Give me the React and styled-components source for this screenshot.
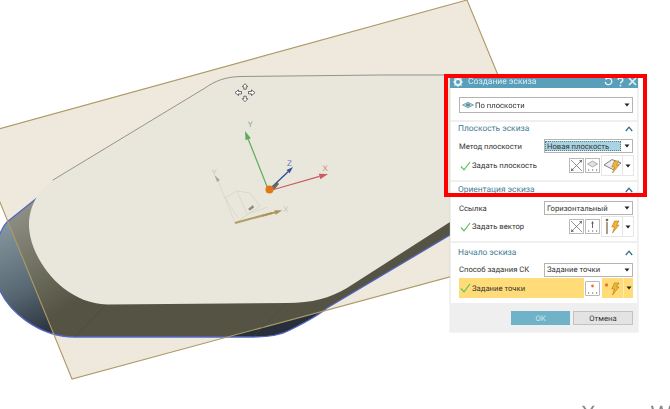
import React from 'react';
import styled, { createGlobalStyle } from 'styled-components';

const GlobalStyle = createGlobalStyle`
  html, body {
    margin: 0;
    padding: 0;
    background: #fff;
    font-family: Roboto, "Liberation Sans", sans-serif;
    text-rendering: geometricPrecision;
  }
`;

const Canvas = styled.div`
  position: relative;
  width: 670px;
  height: 409px;
  overflow: hidden;
  background: #fff;
`;

const Scene = styled.svg`
  display: block;
  width: 670px;
  height: 409px;
`;

const Watermark = styled.div`
  position: absolute;
  left: 581px;
  top: 401px;
  display: flex;
  gap: 55px;
  font-family: "Liberation Sans", sans-serif;
  font-size: 22px;
  line-height: 26px;
  color: #8a8a8a;
  filter: blur(0.7px);
`;

const Dialog = styled.div`
  position: absolute;
  left: 450px;
  top: 75px;
  width: 188px;
  height: 257px;
  display: flex;
  flex-direction: column;
  gap: 2px;
  box-sizing: border-box;
  background: #efefef;
  box-shadow: 0 0 1px #bdbdbd;
  filter: blur(0.35px);
`;

const TitleBar = styled.div`
  height: 13px;
  margin-bottom: -2px;
  padding: 0 1px 0 3px;
  display: flex;
  align-items: center;
  gap: 5px;
  background: #5a9fb9;
`;

const TitleText = styled.span`
  flex: 1;
  font-size: 8.5px;
  line-height: 13px;
  color: #dcecf2;
  padding-top: 1px;
`;

const TitleActions = styled.div`
  display: flex;
  align-items: center;
  gap: 4px;
`;

const Section = styled.section`
  height: ${(p) => p.$h}px;
  padding: ${(p) => p.$top || 0}px 4px 0 8px;
  box-sizing: border-box;
  background: #fff;
  margin: 0 1px;
  display: flex;
  flex-direction: column;
`;

const SectionHeader = styled.div`
  display: flex;
  align-items: center;
  justify-content: space-between;
  height: 13px;
  margin-left: -1px;
  font-size: 8.4px;
  color: #3f7d94;
`;

const Row = styled.div`
  display: flex;
  align-items: center;
  justify-content: space-between;
  height: ${(p) => p.$h}px;
  margin-top: ${(p) => p.$mt || 0}px;
`;

const Label = styled.span`
  font-size: 7.7px;
  color: #333;
  white-space: nowrap;
`;

const CheckLabel = styled.div`
  display: flex;
  align-items: center;
  gap: 1px;
  padding-left: 1px;
  font-size: 7.7px;
  color: #333;
  white-space: nowrap;
`;

const Combo = styled.div`
  width: ${(p) => (p.$wide ? '174px' : '89px')};
  height: ${(p) => p.$h || 14}px;
  box-sizing: border-box;
  padding: 1px 0;
  display: flex;
  align-items: center;
  border: 1px solid #b4b4b4;
  background: #fff;
  font-size: 7.7px;
  color: #333;
`;

const ComboText = styled.span`
  flex: 1;
  display: flex;
  align-items: center;
  align-self: stretch;
  gap: 1px;
  padding-left: 2px;
  white-space: nowrap;
  background: ${(p) => (p.$active ? '#a9d5e3' : 'transparent')};
  outline: ${(p) => (p.$active ? '1px dotted #5c7f8c' : 'none')};
  outline-offset: -1px;
`;

const ComboArrow = styled.span`
  width: 11px;
  display: flex;
  justify-content: center;
`;

const Tools = styled.div`
  display: flex;
  align-items: center;
`;

const ToolButton = styled.div`
  width: 15px;
  height: 15px;
  box-sizing: border-box;
  display: flex;
  align-items: center;
  justify-content: center;
  background: #fff;
  border: 1px solid #b9b9b9;

  & + & {
    margin-left: 1px;
  }
`;

const BigButton = styled.div`
  width: 21px;
  height: 19px;
  margin-left: 2px;
  box-sizing: border-box;
  display: flex;
  align-items: center;
  justify-content: center;
  background: #fff;
  box-shadow: 0 0 0 1px #e6e6e6;
`;

const DropButton = styled.div`
  width: 10px;
  height: 19px;
  box-sizing: border-box;
  display: flex;
  align-items: center;
  justify-content: center;
  background: #fff;
  box-shadow: 0 0 0 1px #e6e6e6;
`;

const ActiveRow = styled.div`
  display: flex;
  align-items: center;
  height: 20px;
  margin-top: 1px;
`;

const ActiveLabel = styled.div`
  width: 125px;
  align-self: stretch;
  display: flex;
  align-items: center;
  gap: 1px;
  padding-left: 1px;
  box-sizing: border-box;
  background: #ffdc78;
  font-size: 7.7px;
  color: #333;
`;

const ActiveTool = styled(ToolButton)`
  margin-left: 1px;
  border-radius: 1px;
`;

const ActiveBig = styled.div`
  width: 21px;
  height: 20px;
  margin-left: 2px;
  display: flex;
  align-items: center;
  justify-content: center;
  background: #ffdc78;
`;

const ActiveDrop = styled.div`
  width: 10px;
  height: 20px;
  box-sizing: border-box;
  display: flex;
  align-items: center;
  justify-content: center;
  border-left: 1px solid #ffeab0;
  background: #ffdc78;
`;

const Footer = styled.div`
  display: flex;
  justify-content: flex-end;
  gap: 3px;
  padding: 6px 5px 0 0;
`;

const FormButton = styled.div`
  width: ${(p) => (p.$primary ? 59 : 60)}px;
  height: 14px;
  box-sizing: border-box;
  display: flex;
  align-items: center;
  justify-content: center;
  font-size: 7.7px;
  background: ${(p) => (p.$primary ? '#70b3c9' : '#e3e3e3')};
  color: ${(p) => (p.$primary ? '#cfe6ee' : '#333')};
  border: 1px solid ${(p) => (p.$primary ? '#70b3c9' : '#c2c2c2')};
`;

const Highlight = styled.div`
  position: absolute;
  left: 444px;
  top: 74px;
  width: 203px;
  height: 123px;
  box-sizing: border-box;
  border: 4px solid #f00;
  pointer-events: none;
`;

const Gear = () => (
  <svg width="10" height="10" viewBox="0 0 10 10">
    <circle cx="5" cy="5" r="3" fill="none" stroke="#e8f3f7" strokeWidth="2" />
    <path d="M5 0v2M5 8v2M0 5h2M8 5h2M1.4 1.4l1.4 1.4M7.2 7.2l1.4 1.4M1.4 8.6l1.4-1.4M7.2 2.8l1.4-1.4" stroke="#e8f3f7" strokeWidth="1.2" />
  </svg>
);

const Reset = () => (
  <svg width="9" height="9" viewBox="0 0 9 9">
    <path d="M2.2 2A3.3 3.3 0 1 1 1.2 4.8" fill="none" stroke="#e8f3f7" strokeWidth="1.3" />
    <path d="M0.8 0.6L3.6 0.9L1.9 3.2Z" fill="#e8f3f7" />
  </svg>
);

const Help = () => (
  <svg width="7" height="10" viewBox="0 0 7 10">
    <path d="M1 2.8C1.2 0.6 5.8 0.5 5.8 2.9C5.8 4.6 3.5 4.6 3.5 6.6" fill="none" stroke="#e8f3f7" strokeWidth="1.4" />
    <rect x="2.7" y="7.8" width="1.6" height="1.6" fill="#e8f3f7" />
  </svg>
);

const Close = () => (
  <svg width="9" height="9" viewBox="0 0 9 9">
    <path d="M1 1L8 8M8 1L1 8" stroke="#e8f3f7" strokeWidth="1.5" />
  </svg>
);

const Caret = () => (
  <svg width="6" height="4" viewBox="0 0 6 4">
    <path d="M0.5 0.5H5.5L3 3.5Z" fill="#222" />
  </svg>
);

const Chevron = () => (
  <svg width="8" height="6" viewBox="0 0 8 6">
    <path d="M0.8 5L4 1.2L7.2 5" fill="none" stroke="#2f6f8a" strokeWidth="1.3" />
  </svg>
);

const Check = () => (
  <svg width="11" height="10" viewBox="0 0 11 10">
    <path d="M1 5.5L4 8.8L10 1" fill="none" stroke="#58c45a" strokeWidth="1.2" />
  </svg>
);

const PlaneEye = () => (
  <svg width="12" height="8" viewBox="0 0 12 8">
    <path d="M0.5 4L6 1.2L11.5 4L6 6.8Z" fill="#b4d0db" stroke="#6f9bac" strokeWidth="0.8" />
    <ellipse cx="6" cy="4" rx="2.2" ry="1.4" fill="#5f8fa3" />
  </svg>
);

const CrossTool = () => (
  <svg width="13" height="13" viewBox="0 0 13 13">
    <path d="M1 12L12 1M1 1L12 12" stroke="#666" strokeWidth="0.7" />
    <path d="M12 1L9 1.5L11.5 4Z M1 12L4 11.5L1.5 9Z" fill="#666" />
  </svg>
);

const Dots = () => <path d="M2 11h1.2M6 11h1.2M10 11h1.2" stroke="#555" strokeWidth="1" />;

const PlaneTool = () => (
  <svg width="13" height="13" viewBox="0 0 13 13">
    <path d="M1.5 5L6.5 2L11.5 5L6.5 8Z" fill="#e2e2e2" stroke="#999" strokeWidth="0.8" />
    <Dots />
  </svg>
);

const VectorTool = () => (
  <svg width="13" height="13" viewBox="0 0 13 13">
    <path d="M6.5 8V2.5" stroke="#555" strokeWidth="0.9" />
    <path d="M6.5 1L7.8 3.6H5.2Z" fill="#555" />
    <Dots />
  </svg>
);

const PointTool = () => (
  <svg width="13" height="13" viewBox="0 0 13 13">
    <circle cx="6.5" cy="4" r="1.4" fill="#e9772b" />
    <Dots />
  </svg>
);

const Bolt = ({ x = 7 }) => (
  <path
    transform={`translate(${x} 3)`}
    d="M3.5 0H8L5.5 4H8L1.5 12L3.5 6H0.8Z"
    fill="#f2b632"
    stroke="#a5791c"
    strokeWidth="0.6"
  />
);

const PlaneBolt = () => (
  <svg width="20" height="16" viewBox="0 0 20 16">
    <path d="M1 7L9 1.5L18 5L10 11.5Z" fill="#ececec" stroke="#666" strokeWidth="0.8" />
    <Bolt x={8} />
  </svg>
);

const VectorBolt = () => (
  <svg width="20" height="17" viewBox="0 0 20 17">
    <path d="M4 16V4" stroke="#7a5b32" strokeWidth="1.2" />
    <circle cx="4" cy="2" r="1.3" fill="#666" />
    <Bolt x={8} />
  </svg>
);

const PointBolt = () => (
  <svg width="20" height="17" viewBox="0 0 20 17">
    <circle cx="3.5" cy="5" r="1.7" fill="#e9772b" />
    <Bolt x={8} />
  </svg>
);

const Arrow = ({ from, to, color, width = 1.2, head = 4 }) => {
  const dx = to[0] - from[0];
  const dy = to[1] - from[1];
  const len = Math.hypot(dx, dy);
  const ux = dx / len;
  const uy = dy / len;
  const bx = to[0] - ux * head * 2;
  const by = to[1] - uy * head * 2;
  const wing = head * 0.65;
  return (
    <g>
      <line x1={from[0]} y1={from[1]} x2={bx} y2={by} stroke={color} strokeWidth={width} />
      <polygon
        points={`${to[0]},${to[1]} ${bx - uy * wing},${by + ux * wing} ${bx + uy * wing},${by - ux * wing}`}
        fill={color}
      />
    </g>
  );
};

const PLANE = '467,0 568,245 72,379 -27,136';
const WALL_EDGE =
  'M37 198 L7 222 C-4 234 -8 262 -3 283 C6 312 40 337 75 337 L253 337 C270 337 281 335 290 330 C302 324 318 316 327 308 L450 235';
const WALL = `${WALL_EDGE} L450 222 L53 180 Z`;
const FACE =
  'M205 88 C215 81 225 77 240 76.5 L380 75 L450 75 L450 222 L347 288 C330 298 312 303 287 303 L107 304.5 C60 303 29 255 29 225 C29 207 38 190 53 180 Z';

const CadScene = () => (
  <Scene viewBox="0 0 670 409">
    <defs>
      <clipPath id="plane-clip">
        <polygon points={PLANE} />
      </clipPath>
      <linearGradient id="wall-blue" gradientUnits="userSpaceOnUse" x1="0" y1="225" x2="50" y2="335">
        <stop offset="0" stopColor="#87979f" />
        <stop offset="0.55" stopColor="#5a6a75" />
        <stop offset="1" stopColor="#27303a" />
      </linearGradient>
      <linearGradient id="wall-olive" gradientUnits="userSpaceOnUse" x1="25" y1="205" x2="80" y2="300">
        <stop offset="0" stopColor="#8f9086" />
        <stop offset="0.5" stopColor="#727364" />
        <stop offset="1" stopColor="#555444" />
      </linearGradient>
    </defs>
    <polygon points={PLANE} fill="#efe9dd" />
    <path d={WALL} fill="url(#wall-blue)" />
    <path d={WALL} fill="url(#wall-olive)" clipPath="url(#plane-clip)" />
    <path d={WALL_EDGE} fill="none" stroke="#5567c4" strokeWidth="1.3" />
    <polygon points={PLANE} fill="none" stroke="#ae9a68" strokeWidth="1.1" />
    <path d="M287 303L253 337M107 304L75 337" stroke="#44443a" strokeWidth="0.5" />
    <path d={FACE} fill="#e9e7db" />
    <path d="M53 180L205 88C215 81 225 77 240 76.5L380 75L450 75" fill="none" stroke="#6f6f68" strokeWidth="0.7" />

    <g stroke="#d4d2c6" strokeWidth="0.7" fill="none">
      <path d="M217 178L235 223L282 210" />
      <path d="M225 198L237 191L250 193L260 206L235 223" />
      <path d="M237 191L247 214M225 198L238 218M247 214L268 207" />
    </g>
    <polygon points="217,182 214.5,175 220,180" fill="#a9a8a0" />
    <polygon points="248,209 253,205 254,207.5 250,210.5" fill="#8b8b85" />
    <path d="M235 223L272 213" stroke="#b19c63" strokeWidth="2" />
    <Arrow from={[262, 216]} to={[282, 210.5]} color="#a99358" width={1.8} head={3.6} />

    <Arrow from={[268, 189]} to={[245, 131]} color="#5dab5d" width={1.2} head={4.4} />
    <Arrow from={[272, 187]} to={[293, 167]} color="#34509a" width={1.4} head={3.4} />
    <polygon points="272,188 277,182 279,184 274,190" fill="#6c6a4e" />
    <Arrow from={[272, 190]} to={[328, 174]} color="#c66060" width={1.2} head={4.4} />
    <circle cx="269.5" cy="189.5" r="4" fill="#e07818" />

    <g fontFamily="Liberation Sans, sans-serif" fontSize="8">
      <text x="247.5" y="127" fill="#87ad87">Y</text>
      <text x="287" y="166" fill="#5b73c0">Z</text>
      <text x="322.5" y="171" fill="#c88080">X</text>
      <text x="283" y="212" fill="#c8c6bb">X</text>
      <text x="211.5" y="175" fill="#c8c6bb">Y</text>
    </g>

    <g fill="#fff" stroke="#333" strokeWidth="0.7" transform="translate(245 92.7)">
      <path d="M0 -9L2.8 -6H1.2V-3.5H-1.2V-6H-2.8Z" />
      <path d="M0 9L2.8 6H1.2V3.5H-1.2V6H-2.8Z" />
      <path d="M-10 0L-6.5 -2.8V-1.2H-3.5V1.2H-6.5V2.8Z" />
      <path d="M10 0L6.5 -2.8V-1.2H3.5V1.2H6.5V2.8Z" />
    </g>
  </Scene>
);

const App = () => (
  <Canvas>
    <GlobalStyle />
    <CadScene />
    <Watermark>
      <span>Х</span>
      <span>W</span>
    </Watermark>
    <Dialog>
      <TitleBar>
        <Gear />
        <TitleText>Создание эскиза</TitleText>
        <TitleActions>
          <Reset />
          <Help />
          <Close />
        </TitleActions>
      </TitleBar>

      <Section $h={32} $top={9}>
        <Combo $wide $h={16}>
          <ComboText>
            <PlaneEye />
            По плоскости
          </ComboText>
          <ComboArrow>
            <Caret />
          </ComboArrow>
        </Combo>
      </Section>

      <Section $h={58} $top={0}>
        <SectionHeader>
          Плоскость эскиза
          <Chevron />
        </SectionHeader>
        <Row $h={14} $mt={4}>
          <Label>Метод плоскости</Label>
          <Combo>
            <ComboText $active>Новая плоскость</ComboText>
            <ComboArrow>
              <Caret />
            </ComboArrow>
          </Combo>
        </Row>
        <Row $h={19} $mt={3}>
          <CheckLabel>
            <Check />
            Задать плоскость
          </CheckLabel>
          <Tools>
            <ToolButton>
              <CrossTool />
            </ToolButton>
            <ToolButton>
              <PlaneTool />
            </ToolButton>
            <BigButton>
              <PlaneBolt />
            </BigButton>
            <DropButton>
              <Caret />
            </DropButton>
          </Tools>
        </Row>
      </Section>

      <Section $h={59} $top={1}>
        <SectionHeader>
          Ориентация эскиза
          <Chevron />
        </SectionHeader>
        <Row $h={14} $mt={5}>
          <Label>Ссылка</Label>
          <Combo>
            <ComboText>Горизонтальный</ComboText>
            <ComboArrow>
              <Caret />
            </ComboArrow>
          </Combo>
        </Row>
        <Row $h={19} $mt={2}>
          <CheckLabel>
            <Check />
            Задать вектор
          </CheckLabel>
          <Tools>
            <ToolButton>
              <CrossTool />
            </ToolButton>
            <ToolButton>
              <VectorTool />
            </ToolButton>
            <BigButton>
              <VectorBolt />
            </BigButton>
            <DropButton>
              <Caret />
            </DropButton>
          </Tools>
        </Row>
      </Section>

      <Section $h={60} $top={3}>
        <SectionHeader>
          Начало эскиза
          <Chevron />
        </SectionHeader>
        <Row $h={15} $mt={3}>
          <Label>Способ задания СК</Label>
          <Combo>
            <ComboText>Задание точки</ComboText>
            <ComboArrow>
              <Caret />
            </ComboArrow>
          </Combo>
        </Row>
        <ActiveRow>
          <ActiveLabel>
            <Check />
            Задание точки
          </ActiveLabel>
          <ActiveTool>
            <PointTool />
          </ActiveTool>
          <ActiveBig>
            <PointBolt />
          </ActiveBig>
          <ActiveDrop>
            <Caret />
          </ActiveDrop>
        </ActiveRow>
      </Section>

      <Footer>
        <FormButton $primary>ОК</FormButton>
        <FormButton>Отмена</FormButton>
      </Footer>
    </Dialog>
    <Highlight />
  </Canvas>
);

export default App;
